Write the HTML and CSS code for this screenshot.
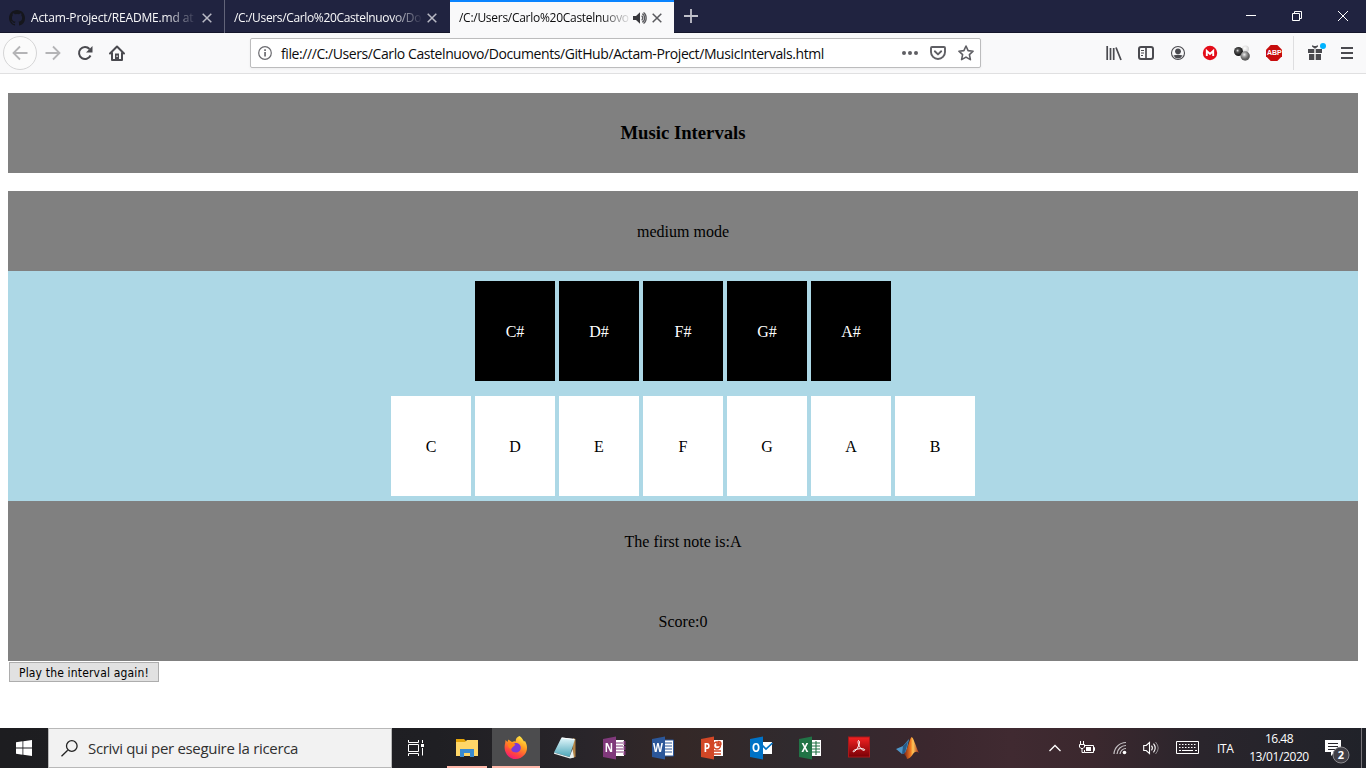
FILE: index.html
```html
<!DOCTYPE html>
<html lang="it">
<head>
<meta charset="utf-8">
<title>Music Intervals</title>
<link rel="stylesheet" href="styles.css">
</head>
<body>
<div class="screen">
<header class="tabstrip">
  <div class="tab tab-first">
    <svg class="github" width="16" height="16" viewBox="0 0 16 16"><path fill="#15161c" d="M8 0C3.58 0 0 3.58 0 8c0 3.54 2.29 6.53 5.47 7.59.4.07.55-.17.55-.38V13.8c-2.01.37-2.53-.49-2.69-.94-.09-.23-.48-.94-.82-1.13-.28-.15-.68-.52-.01-.53.63-.01 1.08.58 1.23.82.72 1.21 1.87.87 2.33.66.07-.52.28-.87.51-1.07-1.78-.2-3.64-.89-3.64-3.95 0-.87.31-1.59.82-2.15-.08-.2-.36-1.02.08-2.12 0 0 .67-.21 2.2.82a7.6 7.6 0 0 1 4 0c1.53-1.04 2.2-.82 2.2-.82.44 1.1.16 1.92.08 2.12.51.56.82 1.27.82 2.15 0 3.07-1.87 3.75-3.65 3.95.29.25.54.73.54 1.48v2.12c0 .21.15.46.55.38A8 8 0 0 0 16 8c0-4.42-3.58-8-8-8z"/></svg>
    <span class="tab-title title-github">Actam-Project/README.md at</span>
    <svg class="close" width="10" height="10" viewBox="0 0 10 10"><path d="M.7.7l8.6 8.6M9.3.7L.7 9.3"/></svg>
  </div>
  <div class="tab tab-second">
    <span class="tab-title title-file">/C:/Users/Carlo%20Castelnuovo/Do</span>
    <svg class="close" width="10" height="10" viewBox="0 0 10 10"><path d="M.7.7l8.6 8.6M9.3.7L.7 9.3"/></svg>
  </div>
  <div class="tab tab-active">
    <span class="tab-title title-active">/C:/Users/Carlo%20Castelnuovo</span>
    <svg class="sound" width="14" height="12" viewBox="0 0 14 12"><path fill="#38383d" d="M0 4h3l4-3.8v11.6L3 8H0z"/><path fill="none" stroke="#58585c" stroke-width="1.200" d="M8.7 3.700q2.200 2.300 0 4.600M9.200 1.700c3.200 1.500 3.200 7.100 0 8.600M10.500.5c3.600 2.400 3.600 8.600 0 11"/></svg>
    <svg class="close" width="10" height="10" viewBox="0 0 10 10"><path d="M.7.7l8.6 8.6M9.3.7L.7 9.3"/></svg>
  </div>
  <svg class="newtab" width="14" height="14" viewBox="0 0 14 14"><path stroke="#c0c1ca" stroke-width="1.800" d="M7 0v14M0 7h14"/></svg>
  <div class="winctl">
    <svg width="46" height="32" viewBox="0 0 46 32"><path fill="#fff" d="M18 15h10v1H18z"/></svg>
    <svg width="46" height="32" viewBox="0 0 46 32"><path fill="none" stroke="#fff" d="M18.500 13.500h7v7h-7zM20.500 13v-1.500h7v7H26"/></svg>
    <svg width="46" height="32" viewBox="0 0 46 32"><path stroke="#fff" d="M18 11l10 10M28 11L18 21"/></svg>
  </div>
</header>
<nav class="toolbar">
  <div class="back"><svg width="16" height="16" viewBox="0 0 16 16"><path class="navline" d="M15.500 8H1.500M8 1.500L1.500 8 8 14.500"/></svg></div>
  <div class="tool"><svg width="16" height="16" viewBox="0 0 16 16"><path class="navline" d="M.5 8h14M8 1.500L14.500 8 8 14.500"/></svg></div>
  <div class="tool"><svg width="16" height="16" viewBox="0 0 16 16"><path fill="none" stroke="#4a4a4f" stroke-width="2" d="M13.500 10.500A6 6 0 1 1 12.500 4"/><path fill="#4a4a4f" d="M15.500 1v6.500H9z"/></svg></div>
  <div class="tool"><svg width="16" height="16" viewBox="0 0 16 16"><path fill="none" stroke="#4a4a4f" stroke-width="2" stroke-linejoin="round" stroke-linecap="round" d="M1 8.500L8 1.500l7 7M3 8v7h10V8"/><path fill="#4a4a4f" d="M6 8.500h4V15H6z"/><path fill="#f9f9fa" d="M7.500 10.500h1.200V12H7.500z"/></svg></div>
  <div class="urlbar">
    <svg width="14" height="14" viewBox="0 0 14 14"><circle cx="7" cy="7" r="6.300" fill="none" stroke="#6b6b70" stroke-width="1.200"/><path fill="#6b6b70" d="M6.200 6h1.700v4.500H6.200zM6.200 3.300h1.700V5H6.200z"/></svg>
    <span class="url">file:///C:/Users/Carlo Castelnuovo/Documents/GitHub/Actam-Project/MusicIntervals.html</span>
    <svg class="dots" width="16" height="16" viewBox="0 0 16 16"><g fill="#5f5f64"><circle cx="2" cy="8" r="2"/><circle cx="8" cy="8" r="2"/><circle cx="14" cy="8" r="2"/></g></svg>
    <svg class="pocket" width="16" height="16" viewBox="0 0 16 16"><path fill="none" stroke="#5f5f64" stroke-width="1.900" stroke-linejoin="round" stroke-linecap="round" d="M2 2h12q1 0 1 1v4a7 7 0 0 1-14 0V3q0-1 1-1zM4.800 6.300L8 9.400l3.200-3.100"/></svg>
    <svg class="star" width="16" height="16" viewBox="0 0 16 16"><path fill="none" stroke="#5f5f64" stroke-width="1.600" stroke-linejoin="round" d="M8 1l2.100 4.600 5 .6-3.700 3.400 1 5L8 12.100 3.600 14.600l1-5L.9 6.200l5-.6z"/></svg>
  </div>
  <div class="tool tool-library"><svg width="16" height="16" viewBox="0 0 16 16"><path stroke="#4a4a4f" stroke-width="1.700" d="M1.200 1v14M4.500 3v12M7.700 3v12M10 2.500L15 15"/></svg></div>
  <div class="tool"><svg width="16" height="16" viewBox="0 0 16 16"><rect x="1" y="2" width="14" height="12" rx="2" fill="none" stroke="#4a4a4f" stroke-width="2"/><path stroke="#4a4a4f" stroke-width="1.700" d="M8 2v12"/><path stroke="#4a4a4f" d="M3 5.500h3M3 8h3M3 10.500h2"/></svg></div>
  <div class="tool"><svg width="16" height="16" viewBox="0 0 16 16"><circle cx="8" cy="8" r="6.500" fill="none" stroke="#4a4a4f" stroke-width="1.100"/><circle cx="8" cy="6.300" r="2.900" fill="#4a4a4f"/><path fill="#4a4a4f" d="M3.400 10.500Q8 8.800 12.600 10.500 11 13.400 8 13.400t-4.600-2.900z"/></svg></div>
  <div class="tool"><svg width="16" height="16" viewBox="0 0 16 16"><circle cx="8" cy="8" r="7.200" fill="#e40c18"/><path fill="none" stroke="#fff" stroke-width="1.900" d="M4.800 11V6L8 9l3.200-3v5"/></svg></div>
  <div class="tool"><svg width="16" height="16" viewBox="0 0 16 16"><defs><radialGradient id="dark" cx=".4" cy=".4"><stop stop-color="#ddd"/><stop offset=".35" stop-color="#555"/><stop offset="1" stop-color="#1c1c1c"/></radialGradient><radialGradient id="mid" cx=".4" cy=".35"><stop stop-color="#eee"/><stop offset=".5" stop-color="#999"/><stop offset="1" stop-color="#5c5c5c"/></radialGradient><radialGradient id="light" cx=".4" cy=".4"><stop stop-color="#fff"/><stop offset="1" stop-color="#d8d8d8"/></radialGradient></defs><circle cx="11.500" cy="4" r="3.600" fill="url(#light)"/><circle cx="4.500" cy="6.500" r="4.500" fill="url(#dark)"/><circle cx="11.200" cy="11" r="4.700" fill="url(#mid)"/></svg></div>
  <div class="tool abp"><svg width="16" height="16" viewBox="0 0 16 16"><path fill="#c70d0d" d="M4.700 0h6.600L16 4.700v6.600L11.300 16H4.700L0 11.300V4.700z"/></svg><b class="abp-text">ABP</b></div>
  <div class="tool tool-gift"><svg width="20" height="20" viewBox="0 0 20 20"><g fill="#4a4a4f"><path d="M3 6h6.300v4H3zM10.700 6H17v4h-6.300zM4 11h5.300v6H4zM10.700 11H16v6h-5.300zM7 2.300l2.200.8h1.600l2.200-.8v1.200L10.500 5.500h-1L7 3.500z"/></g><circle cx="18" cy="3" r="3" fill="#00b3ff"/></svg></div>
  <div class="tool"><svg width="16" height="16" viewBox="0 0 16 16"><path stroke="#4a4a4f" stroke-width="2" d="M2 3h12M2 8h12M2 13h12"/></svg></div>
</nav>
<main class="page">
  <h3 class="bar">Music Intervals</h3>
  <div class="bar">medium mode</div>
  <section class="keyboard">
    <div class="keys"><div class="key black">C#</div><div class="key black">D#</div><div class="key black">F#</div><div class="key black">G#</div><div class="key black">A#</div></div>
    <div class="keys"><div class="key">C</div><div class="key">D</div><div class="key">E</div><div class="key">F</div><div class="key">G</div><div class="key">A</div><div class="key">B</div></div>
  </section>
  <div class="bar">The first note is:A</div>
  <div class="bar">Score:0</div>
  <button class="play"><span class="play-label">Play the interval again!</span></button>
</main>
<footer class="taskbar">
  <div class="start"><svg width="16" height="16" viewBox="0 0 16 16"><path fill="#fff" d="M0 2.200l6.500-.9v6.200H0zM7.300 1.200L16 0v7.500H7.300zM0 8.400h6.500v6.300L0 13.800zM7.300 8.400H16V16l-8.700-1.200z"/></svg></div>
  <div class="search"><svg width="17" height="17" viewBox="0 0 17 17"><path fill="none" stroke="#222" stroke-width="1.300" d="M6.700 10.200L.5 16.300"/><circle cx="10.800" cy="6" r="5.300" fill="none" stroke="#222" stroke-width="1.300"/></svg><span class="search-text">Scrivi qui per eseguire la ricerca</span></div>
  <div class="taskview"><svg width="18" height="16" viewBox="0 0 18 16"><path fill="none" stroke="#fff" d="M1.500 0v2.500h10V0M1.500 4.500h10v7h-10zM1.500 16v-2.500h10V16M15.500 0v3M15.500 8v7.500"/><path fill="#fff" d="M14 4h3v3h-3z"/></svg></div>
  <div class="apps">
    <div class="app running"><svg width="24" height="24" viewBox="0 0 24 24"><path fill="#e5a50a" d="M1 3h8l2 2v4H1z"/><path fill="#ffd768" d="M1 6h9l2-2h11v16H1z"/><path fill="#3a8bd0" d="M5 13h14v8h-4v-4H9v4H5z"/></svg></div>
    <div class="app running current"><svg width="24" height="24" viewBox="0 0 24 24"><defs><linearGradient id="fire" x1=".8" y1="0" x2=".3" y2="1"><stop stop-color="#fff04a"/><stop offset=".4" stop-color="#ff9a20"/><stop offset=".75" stop-color="#ff453f"/><stop offset="1" stop-color="#f4157c"/></linearGradient></defs><path fill="url(#fire)" d="M15.500 0c2 1.200 3 3.200 4.500 5.500l1-.5c3 5 2.500 10-.5 13.800C16 24.500 7 24.500 3 18.800.5 15 0 11 1.200 7L1.500 4l2 2 .8-2.500L8 6q2-1 4-.5C11 3.500 13 1 15.500 0z"/><path fill="#7b38d8" d="M9 8.500c1.500-2 4.500-2 6-.5 3.500 2.700 1.700 8.500-2.800 8.500C8 16.500 6 13.500 8 11z"/><path fill="#ff8518" d="M4.500 7c3-1 4.500 1 7 1.500l-2 2c-1.500.5-1 2-2.500 2.200C4 12.500 3.500 9 4.500 7z"/></svg></div>
    <div class="app"><svg width="24" height="24" viewBox="0 0 24 24"><defs><linearGradient id="note" x1="0" y1="0" x2="0" y2="1"><stop stop-color="#e4f8fc"/><stop offset="1" stop-color="#4aa5b8"/></linearGradient></defs><path fill="#b38547" d="M20 2l2.500 1V21L19 22z"/><path fill="url(#note)" d="M8.500 1.500L22 3l-5.500 18L1 16.500z"/><path fill="#e7f1f1" d="M1 16.500L16.500 21l3-8 1.500 8.500-4 1L1 17.800z"/><path stroke="#fff" d="M9 2l12 1.500"/></svg></div>
    <div class="app"><svg width="24" height="24" viewBox="0 0 24 24"><path fill="#fff" d="M12 4h10v16H12z"/><path stroke="#80397b" stroke-width="1" d="M14 7h7M14 10h7M14 13h7M14 16h7"/><path stroke="#80397b" stroke-width="2" d="M22.500 5v4M22.500 10v4M22.500 15v4"/><path fill="#80397b" d="M1 3l13-2.500v23L1 21z"/></svg><b class="letter">N</b></div>
    <div class="app"><svg width="24" height="24" viewBox="0 0 24 24"><path fill="#fff" stroke="#2b579a" d="M13 4h9.500v16H13z"/><path stroke="#2b579a" stroke-width="1.200" d="M14 7h7M14 10h7M14 13h7M14 16h7"/><path fill="#2b579a" d="M1 3l13-2.500v23L1 21z"/></svg><b class="letter">W</b></div>
    <div class="app"><svg width="24" height="24" viewBox="0 0 24 24"><path fill="#fff" d="M12 4h11v16H12z"/><path fill="none" stroke="#d24726" stroke-width="1.400" d="M14 15h7M14 18h7M20.500 9.500a3.500 3.500 0 1 1-3.500-3.500v3.500zM18.500 5.500q2.500 0 2.500 2.500h-2.500z"/><path fill="#d24726" d="M1 3l13-2.500v23L1 21z"/></svg><b class="letter">P</b></div>
    <div class="app"><svg width="24" height="24" viewBox="0 0 24 24"><path fill="#fff" d="M13 6h10v12H13z"/><path fill="none" stroke="#0072c6" stroke-width="1.700" d="M13 9l4 4 6.500-6"/><path fill="#0072c6" d="M1 3l13-2.500v23L1 21z"/></svg><b class="letter">O</b></div>
    <div class="app"><svg width="24" height="24" viewBox="0 0 24 24"><path fill="#fff" d="M12 4h11v16H12z"/><path stroke="#217346" stroke-width="1.100" d="M14 7h8M14 10h8M14 13h8M14 16h8M18 5v14"/><path fill="#217346" d="M1 3l13-2.500v23L1 21z"/></svg><b class="letter">X</b></div>
    <div class="app"><svg width="24" height="24" viewBox="0 0 24 24"><defs><linearGradient id="pdf" x1="0" y1="0" x2="0" y2="1"><stop stop-color="#f52222"/><stop offset="1" stop-color="#790006"/></linearGradient></defs><rect x="1.500" y="1" width="21" height="20" fill="url(#pdf)" stroke="#a9181a"/><path fill="none" stroke="#fff" stroke-width="1" d="M11.500 4.500q1.700 0 .7 4-1.500 4.500-4.700 7c-2 1-2-.8.700-1.800 4-1.300 6.500-1.300 8.800-.6 1.800.8 0 2-1.800.6C12.500 11.500 10 6.500 11.500 4.500z"/></svg></div>
    <div class="app"><svg width="24" height="24" viewBox="0 0 24 24"><defs><linearGradient id="mat"><stop stop-color="#762118"/><stop offset=".45" stop-color="#f27b22"/><stop offset=".6" stop-color="#ffc85a"/><stop offset="1" stop-color="#9f2418"/></linearGradient></defs><path fill="#4e96c8" d="M0 13l7-3 6-7-3 14-4 1z"/><path fill="#275b88" d="M7 10l5-5-3 12-3 1z"/><path fill="url(#mat)" d="M15.500 1c2 0 4 9 7.500 16-3-2.500-5-1-7 2.500-1 1.500-3 3-5 3.500-.5-2-1.500-4-3-5 3-2 5-14 7.500-17z"/></svg></div>
  </div>
  <div class="tray">
    <svg class="chevron" width="12" height="8" viewBox="0 0 12 8"><path fill="none" stroke="#fff" stroke-width="1.300" d="M.5 7L6 1.500 11.500 7"/></svg>
    <svg class="battery" width="16" height="14" viewBox="0 0 16 14"><path fill="none" stroke="#fff" d="M6 4.500h8.500v7h-9V9M14.500 6.500h1v3h-1M1.500 0v3M4.500 0v3M.5 3.500h5V6L4 7.500H2L.5 6zM3 8v3.500h2.500"/><path fill="#fff" d="M7 6h5v4H7z"/></svg>
    <svg class="wifi" width="14" height="14" viewBox="0 0 14 14"><g fill="none" stroke="#c8c4c7" stroke-width="1.200"><path d="M1 13A12 12 0 0 1 13 1.500M4 13A9 9 0 0 1 13 4.500M7 13a6 6 0 0 1 6-5.500"/></g><circle cx="11.500" cy="11.500" r="1.800" fill="#fff"/></svg>
    <svg class="volume" width="17" height="14" viewBox="0 0 17 14"><path fill="none" stroke="#fff" stroke-width="1.100" d="M.7 4.500h2.500l3.300-3v11l-3.300-3H.7zM8.500 4.700q1.800 2.300 0 4.600M10.500 2.700q3.400 4.300 0 8.600"/><path fill="none" stroke="#8d898d" d="M12.500 1q5.400 6 0 12"/></svg>
    <svg class="osk" width="24" height="14" viewBox="0 0 24 14"><path fill="none" stroke="#fff" d="M.5.500h22v12H.5z"/><path stroke="#fff" stroke-dasharray="1.500 1.500" d="M3 3.500h18M3 6.500h18"/><path stroke="#fff" d="M3 9.500h2M6 9.500h11M19 9.500h2"/></svg>
    <span class="lang">ITA</span>
    <div class="clock"><span class="time">16.48</span><span class="date">13/01/2020</span></div>
    <div class="notice"><svg width="26" height="26" viewBox="0 0 26 26"><path fill="#fff" d="M0 1h16v12h-6l-4 4v-4H0z"/><path stroke="#27252b" d="M3 4.500h10M3 7.500h10M3 10.500h7"/><circle cx="16" cy="16" r="8" fill="#414047" stroke="#8b8a8e"/></svg><span class="count">2</span></div>
  </div>
</footer>
</div>
</body>
</html>
```
FILE: styles.css
```css
* { box-sizing: border-box; }
body { margin: 0; background: #fff; }
svg { display: block; flex: none; overflow: visible; }
.screen { width: 1366px; height: 768px; display: flex; flex-direction: column; overflow: hidden; }

.tabstrip { display: flex; height: 33px; flex: none; background: #202340; border-bottom: 1px solid #14162b; font: 12px "Open Sans", "Noto Sans", sans-serif; color: #f9f9fa; }
.tab { display: flex; align-items: center; width: 225px; height: 33px; flex: none; padding: 2px 13px 0 9px; }
.tab-first { border-right: 1px solid #626479; padding-right: 12px; }
.tab-active { width: 224px; padding: 0 12px 0 9px; background: #f9f9fa; border-top: 2px solid #0a84ff; color: #0c0c0d; }
.tab-second { padding-left: 9px; }
.github { margin-right: 6px; }
.tab-title { overflow: hidden; white-space: nowrap; line-height: 18px; flex: none; mask-image: linear-gradient(to right, #000 calc(100% - 32px), transparent); }
.title-github { width: 166px; letter-spacing: -.15px; }
.title-file { width: 189px; letter-spacing: -.35px; }
.title-active { width: 173px; letter-spacing: -.28px; }
.close { margin-left: auto; fill: none; stroke: #b9bac5; stroke-width: 1.500; }
.tab-active .close { stroke: #5a5a5e; }
.sound { margin-left: 1px; }
.newtab { margin: 9px 0 0 10px; }
.winctl { display: flex; margin-left: auto; }

.toolbar { display: flex; align-items: center; height: 41px; flex: none; background: #f9f9fa; border-bottom: 1px solid #e0e0e1; }
.back { display: flex; align-items: center; justify-content: center; width: 34px; height: 34px; margin-left: 3px; border: 1px solid #d5d5d6; border-radius: 50%; background: #fbfbfb; }
.navline { fill: none; stroke: #b4b4b6; stroke-width: 1.800; }
.tool { display: flex; align-items: center; justify-content: center; width: 32px; height: 34px; flex: none; }
.urlbar { display: flex; align-items: center; width: 731px; height: 30px; margin-left: 117px; padding: 0 6px 0 7px; background: #fff; border: 1px solid #bcbcbd; border-radius: 2px; box-shadow: 0 1px 3px #0000000d; }
.url { margin-left: 9px; width: 545px; padding-top: 1px; font: 14px/20px "Open Sans", "Noto Sans", sans-serif; letter-spacing: -.415px; color: #0c0c0d; white-space: nowrap; }
.dots { margin-left: auto; }
.pocket, .star { margin-left: 12px; }
.tool-library { margin-left: 117px; }
.abp { position: relative; }
.abp-text { position: absolute; left: 9px; top: 12px; color: #fff; font: bold 7px/10px "Liberation Sans", sans-serif; }
.tool-gift { width: 38px; padding-left: 6px; margin-left: 3px; border-left: 1px solid #dedee0; }
.tool-gift svg { margin-left: -1px; }

.page { flex: 1; padding: 19px 8px 0; font: 16px/20px "Liberation Serif", serif; color: #000; }
.bar { height: 80px; margin: 0; display: flex; align-items: center; justify-content: center; padding-top: 2px; background: #808080; }
h3.bar { margin-bottom: 18px; padding-top: 0; font-size: 18.700px; font-weight: bold; }
.keyboard { height: 230px; padding-top: 10px; background: #add8e6; }
.keys { display: flex; justify-content: center; gap: 4px; height: 100px; margin-bottom: 15px; }
.key { display: flex; align-items: center; justify-content: center; width: 80px; height: 100px; padding-top: 2px; background: #fff; }
.black { background: #000; color: #fff; }
.play { display: flex; align-items: center; justify-content: center; width: 150px; height: 20px; margin: 1px 0 0 1px; padding: 0; background: #e1e1e1; border: 1px solid #adadad; border-radius: 0; }
.play-label { padding-top: 1px; font: 12px/16px "DejaVu Sans Condensed", "DejaVu Sans", sans-serif; letter-spacing: .17px; color: #000; white-space: nowrap; }

.taskbar { display: flex; height: 40px; flex: none; color: #fff; background: linear-gradient(90deg, #1d1d20 0, #1f1f23 32%, #29252a 43%, #342827 50%, #302a2e 58%, #3b272e 68%, #402a31 74%, #3b282e 80%, #2a252c 88%, #202229 100%); font: 12px "Open Sans", "Noto Sans", sans-serif; }
.start, .taskview { display: flex; align-items: center; justify-content: center; width: 48px; flex: none; }
.search { display: flex; align-items: center; width: 344px; flex: none; padding-left: 12px; background: #f2f2f2; border: 1px solid #b8b8b8; }
.search-text { margin-left: 10px; font: 15px/20px "Open Sans", "Noto Sans", sans-serif; letter-spacing: -.32px; color: #303030; }
.apps { display: flex; gap: 1px; margin-left: 3px; }
.app { position: relative; display: flex; align-items: center; justify-content: center; width: 48px; height: 40px; }
.running { background: linear-gradient(#ffb8aa, #ffb8aa) center bottom / 40px 2px no-repeat; }
.current { background: linear-gradient(#ffb8aa, #ffb8aa) center bottom / 48px 2px no-repeat, #4c4c4e; }
.letter { position: absolute; left: 12px; top: 12px; width: 14px; text-align: center; font: bold 12px/16px "Noto Sans", sans-serif; transform: scaleX(.85); }
.tray { display: flex; align-items: center; margin-left: auto; padding-right: 4px; }
.battery { margin-left: 18px; }
.wifi { margin-left: 18px; }
.volume { margin-left: 16px; }
.osk { margin-left: 16px; }
.lang { width: 18px; margin-left: 17px; letter-spacing: -.4px; white-space: nowrap; }
.clock { display: flex; flex-direction: column; align-items: center; width: 60px; margin-left: 14px; line-height: 18px; white-space: nowrap; }
.time { letter-spacing: -.5px; }
.date { letter-spacing: -.4px; }
.notice { position: relative; width: 37px; height: 40px; margin-left: 16px; padding-top: 11px; border-right: 1px solid #77747a; }
.count { position: absolute; left: 11px; top: 19px; width: 10px; text-align: center; font: bold 11px/16px "Open Sans", sans-serif; }
```
